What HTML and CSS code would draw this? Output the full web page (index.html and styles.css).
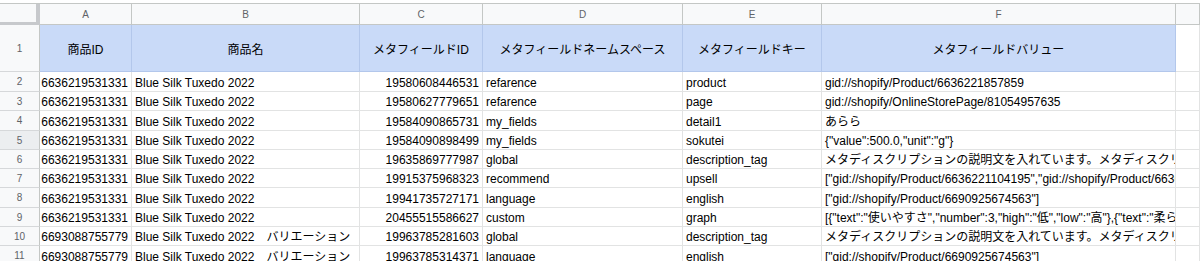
FILE: index.html
```html
<!DOCTYPE html>
<html lang="ja">
<head>
<meta charset="utf-8">
<title>Sheet</title>
<link rel="stylesheet" href="styles.css">
</head>
<body>
<div class="sheet">
  <div class="corner"></div>
  <div class="colhead">A</div>
  <div class="colhead">B</div>
  <div class="colhead">C</div>
  <div class="colhead">D</div>
  <div class="colhead">E</div>
  <div class="colhead">F</div>
  <div class="colhead"></div>

  <div class="rowhead">1</div>
  <div class="hcell">商品ID</div>
  <div class="hcell">商品名</div>
  <div class="hcell">メタフィールドID</div>
  <div class="hcell">メタフィールドネームスペース</div>
  <div class="hcell">メタフィールドキー</div>
  <div class="hcell">メタフィールドバリュー</div>
  <div class="cell"></div>

  <div class="rowhead">2</div>
  <div class="cell num">6636219531331</div>
  <div class="cell">Blue Silk Tuxedo 2022</div>
  <div class="cell num">19580608446531</div>
  <div class="cell">refarence</div>
  <div class="cell">product</div>
  <div class="cell">gid://shopify/Product/6636221857859</div>
  <div class="cell"></div>

  <div class="rowhead">3</div>
  <div class="cell num">6636219531331</div>
  <div class="cell">Blue Silk Tuxedo 2022</div>
  <div class="cell num">19580627779651</div>
  <div class="cell">refarence</div>
  <div class="cell">page</div>
  <div class="cell">gid://shopify/OnlineStorePage/81054957635</div>
  <div class="cell"></div>

  <div class="rowhead">4</div>
  <div class="cell num">6636219531331</div>
  <div class="cell">Blue Silk Tuxedo 2022</div>
  <div class="cell num">19584090865731</div>
  <div class="cell">my_fields</div>
  <div class="cell">detail1</div>
  <div class="cell">あらら</div>
  <div class="cell"></div>

  <div class="rowhead rowhead-hover">5</div>
  <div class="cell num">6636219531331</div>
  <div class="cell">Blue Silk Tuxedo 2022</div>
  <div class="cell num">19584090898499</div>
  <div class="cell">my_fields</div>
  <div class="cell">sokutei</div>
  <div class="cell">{"value":500.0,"unit":"g"}</div>
  <div class="cell"></div>

  <div class="rowhead">6</div>
  <div class="cell num">6636219531331</div>
  <div class="cell">Blue Silk Tuxedo 2022</div>
  <div class="cell num">19635869777987</div>
  <div class="cell">global</div>
  <div class="cell">description_tag</div>
  <div class="cell">メタディスクリプションの説明文を入れています。メタディスクリプションの説明文を入れています。</div>
  <div class="cell"></div>

  <div class="rowhead">7</div>
  <div class="cell num">6636219531331</div>
  <div class="cell">Blue Silk Tuxedo 2022</div>
  <div class="cell num">19915375968323</div>
  <div class="cell">recommend</div>
  <div class="cell">upsell</div>
  <div class="cell">["gid://shopify/Product/6636221104195","gid://shopify/Product/6636221857859"]</div>
  <div class="cell"></div>

  <div class="rowhead">8</div>
  <div class="cell num">6636219531331</div>
  <div class="cell">Blue Silk Tuxedo 2022</div>
  <div class="cell num">19941735727171</div>
  <div class="cell">language</div>
  <div class="cell">english</div>
  <div class="cell">["gid://shopify/Product/6690925674563"]</div>
  <div class="cell"></div>

  <div class="rowhead">9</div>
  <div class="cell num">6636219531331</div>
  <div class="cell">Blue Silk Tuxedo 2022</div>
  <div class="cell num">20455515586627</div>
  <div class="cell">custom</div>
  <div class="cell">graph</div>
  <div class="cell">[{"text":"使いやすさ","number":3,"high":"低","low":"高"},{"text":"柔らかさ","number":4,"high":"硬","low":"柔"}]</div>
  <div class="cell"></div>

  <div class="rowhead">10</div>
  <div class="cell num">6693088755779</div>
  <div class="cell">Blue Silk Tuxedo 2022　バリエーション</div>
  <div class="cell num">19963785281603</div>
  <div class="cell">global</div>
  <div class="cell">description_tag</div>
  <div class="cell">メタディスクリプションの説明文を入れています。メタディスクリプションの説明文を入れています。</div>
  <div class="cell"></div>

  <div class="rowhead">11</div>
  <div class="cell num">6693088755779</div>
  <div class="cell">Blue Silk Tuxedo 2022　バリエーション</div>
  <div class="cell num">19963785314371</div>
  <div class="cell">language</div>
  <div class="cell">english</div>
  <div class="cell">["gid://shopify/Product/6690925674563"]</div>
  <div class="cell"></div>
</div>
</body>
</html>
```

FILE: styles.css
```css
html, body {
  margin: 0;
  padding: 0;
  background: #ffffff;
}

body {
  font-family: "Liberation Sans", Arial, "Noto Sans CJK JP", sans-serif;
  font-size: 12px;
  color: #000000;
  overflow: hidden;
}

.sheet {
  margin-top: 3px;
  border-top: 1px solid #c4c7c5;
  display: grid;
  grid-template-columns: 40px 92px 228px 123px 200px 139px 354px 24px;
  grid-template-rows: 21px 47px 20px 19px 20px 19px 19px 19px 20px 19px 19px 20px;
}

.sheet > div {
  box-sizing: border-box;
  overflow: hidden;
  white-space: nowrap;
}

.corner {
  background: #f8f9fa;
  border-right: 4px solid #c7c9cc;
  border-bottom: 3px solid #c7c9cc;
}

.colhead {
  background: #f8f9fa;
  border-right: 1px solid #c4c7c5;
  border-bottom: 1px solid #c4c7c5;
  color: #5f6368;
  font-size: 10px;
  display: flex;
  align-items: center;
  justify-content: center;
}

.rowhead {
  background: #f8f9fa;
  border-right: 1px solid #c4c7c5;
  border-bottom: 1px solid #d6d8da;
  color: #5f6368;
  font-size: 10px;
  display: flex;
  align-items: center;
  justify-content: center;
}

.rowhead-hover {
  background: #eceef0;
}

.hcell {
  background: #c9daf8;
  border-right: 1px solid #b3c7eb;
  border-bottom: 1px solid #b3c7eb;
  font-size: 12px;
  display: flex;
  align-items: center;
  justify-content: center;
  padding: 0 3px;
}

.cell {
  border-right: 1px solid #e2e3e3;
  border-bottom: 1px solid #e2e3e3;
  display: flex;
  align-items: flex-end;
  justify-content: flex-start;
  padding: 0 3px 1px 3px;
  line-height: normal;
}

.num {
  justify-content: flex-end;
}
```
